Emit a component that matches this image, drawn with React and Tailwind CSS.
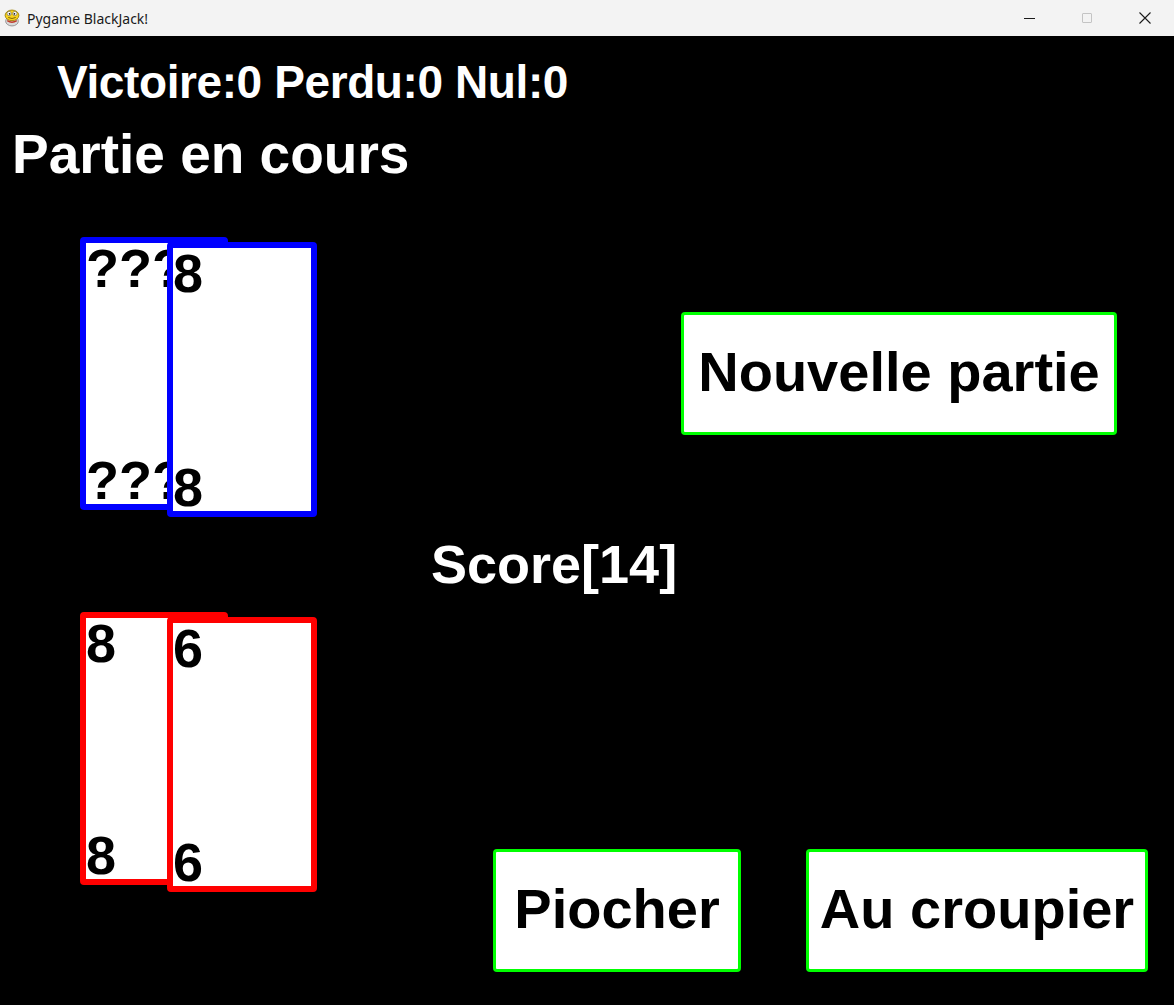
import React from 'react';

const FONT = { fontFamily: '"Liberation Sans", Arial, sans-serif' };

function PygameIcon() {
  return (
    <svg width="18" height="18" viewBox="0 0 17 17">
      <ellipse cx="8.5" cy="11.5" rx="6" ry="4.5" fill="#d9d9d9" stroke="#8a8a8a" strokeWidth="0.8" />
      <path d="M4 11 Q8.5 14 13 11" stroke="#c0392b" strokeWidth="1.2" fill="none" />
      <ellipse cx="8.5" cy="6" rx="6.5" ry="5" fill="#f7d21e" stroke="#9a7d00" strokeWidth="0.8" />
      <circle cx="5.8" cy="4.3" r="2" fill="#fff" stroke="#555" strokeWidth="0.5" />
      <circle cx="11.2" cy="4.3" r="2" fill="#fff" stroke="#555" strokeWidth="0.5" />
      <circle cx="6.2" cy="4.6" r="0.8" fill="#111" />
      <circle cx="10.8" cy="4.6" r="0.8" fill="#111" />
      <path d="M5 8 Q8.5 10 12 8" stroke="#6b5200" strokeWidth="0.8" fill="none" />
    </svg>
  );
}

function TitleBar() {
  return (
    <div className="flex items-center h-[36px] bg-[#f3f3f3] shrink-0">
      <div className="pl-[3px] pr-[6px] flex items-center">
        <PygameIcon />
      </div>
      <span className="text-[14px] text-[#1a1a1a]" style={{ fontFamily: '"Noto Sans", "Open Sans", sans-serif' }}>
        Pygame BlackJack!
      </span>
      <div className="ml-auto flex h-full">
        <div className="w-[58px] flex items-center justify-center">
          <div className="w-[11px] h-[1px] bg-[#1a1a1a]" />
        </div>
        <div className="w-[58px] flex items-center justify-center">
          <div className="w-[10px] h-[10px] border border-[#c4c4c4] rounded-[1px]" />
        </div>
        <div className="w-[58px] flex items-center justify-center">
          <svg width="12" height="12" viewBox="0 0 12 12">
            <path d="M0.5 0.5 L11.5 11.5 M11.5 0.5 L0.5 11.5" stroke="#1a1a1a" strokeWidth="1.1" />
          </svg>
        </div>
      </div>
    </div>
  );
}

function Card({ top, border, className }) {
  return (
    <div
      className={`relative flex flex-col justify-between bg-white border-[6px] rounded-[4px] text-black font-bold text-[54px] leading-none overflow-hidden ${border} ${className}`}
      style={FONT}
    >
      <span className="-mt-[2px] whitespace-nowrap">{top}</span>
      <span className="-mb-[3px] whitespace-nowrap">{top}</span>
    </div>
  );
}

function Hand({ cards, border }) {
  return (
    <div className="flex items-start ml-[80px] shrink-0">
      <Card top={cards[0]} border={border} className="w-[148px] h-[273px]" />
      <Card top={cards[1]} border={border} className="w-[150px] h-[275px] -ml-[61px] mt-[5px]" />
    </div>
  );
}

function GameButton({ label, className }) {
  return (
    <button
      className={`flex items-center justify-center bg-white border-[3px] border-[#00ff00] rounded-[4px] text-black font-bold text-[56px] leading-none shrink-0 ${className}`}
      style={FONT}
    >
      <span className="-mt-[4px]">{label}</span>
    </button>
  );
}

export default function App() {
  return (
    <div className="w-[1174px] h-[1005px] flex flex-col bg-black overflow-hidden">
      <TitleBar />
      <div className="flex-1 flex flex-col bg-black text-white" style={FONT}>
        <div className="pl-[57px] mt-[23px] text-[46px] font-bold leading-none tracking-[-0.4px]">
          Victoire:0 Perdu:0 Nul:0
        </div>
        <div className="pl-[12px] mt-[22px] text-[55px] font-bold leading-none">
          Partie en cours
        </div>

        {/* Dealer hand + new game */}
        <div className="flex items-start mt-[55px]">
          <Hand cards={['???', '8']} border="border-[#0000ff]" />
          <GameButton label="Nouvelle partie" className="ml-[364px] mt-[75px] w-[436px] h-[123px]" />
        </div>

        <div className="pl-[431px] mt-[20px] text-[54px] font-bold leading-none">
          Score[14]
        </div>

        {/* Player hand + actions */}
        <div className="flex items-start mt-[21px]">
          <Hand cards={['8', '6']} border="border-[#ff0000]" />
          <GameButton label="Piocher" className="ml-[176px] mt-[237px] w-[248px] h-[123px]" />
          <GameButton label="Au croupier" className="ml-[65px] mt-[237px] w-[342px] h-[123px]" />
        </div>
      </div>
    </div>
  );
}
